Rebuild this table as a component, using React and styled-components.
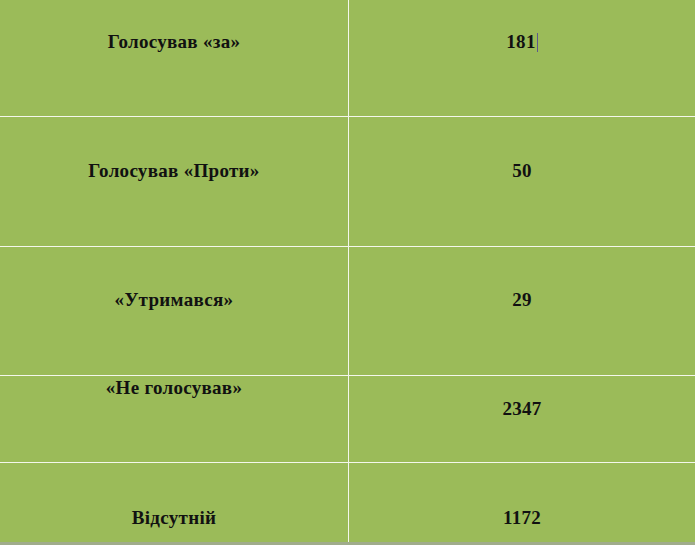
import React from "react";
import styled, { createGlobalStyle } from "styled-components";

const GlobalStyle = createGlobalStyle`
  html, body {
    margin: 0;
    padding: 0;
    background: #a0ac8c;
  }
`;

const Table = styled.div`
  width: 695px;
  display: grid;
  grid-template-columns: 348px 1fr;
  grid-template-rows: 116px 129px 128px 86px 79px;
  gap: 1px;
  background: #f4f7ec;
`;

const Cell = styled.div`
  background: #9bbb59;
  display: flex;
  justify-content: center;
  align-items: flex-start;
  padding-top: ${(p) => p.$top}px;
  box-sizing: border-box;
  font-family: "Liberation Serif", "DejaVu Serif", serif;
  font-weight: bold;
  font-size: 19px;
  line-height: 22px;
  letter-spacing: 0.3px;
  color: #111111;
`;

const Caret = styled.span`
  display: inline-block;
  width: 1px;
  height: 19px;
  margin-left: 1px;
  vertical-align: -4px;
  background: #5c5a8c;
`;

const rows = [
  { label: "Голосував «за»", value: "181", top: 31, valueTop: 31, caret: true },
  { label: "Голосував «Проти»", value: "50", top: 43, valueTop: 43 },
  { label: "«Утримався»", value: "29", top: 42, valueTop: 42 },
  { label: "«Не голосував»", value: "2347", top: 1, valueTop: 22 },
  { label: "Відсутній", value: "1172", top: 44, valueTop: 44 },
];

export default function App() {
  return (
    <>
      <GlobalStyle />
      <Table>
        {rows.map((r) => (
          <React.Fragment key={r.label}>
            <Cell $top={r.top}>{r.label}</Cell>
            <Cell $top={r.valueTop}>
              <span>
                {r.value}
                {r.caret && <Caret />}
              </span>
            </Cell>
          </React.Fragment>
        ))}
      </Table>
    </>
  );
}
